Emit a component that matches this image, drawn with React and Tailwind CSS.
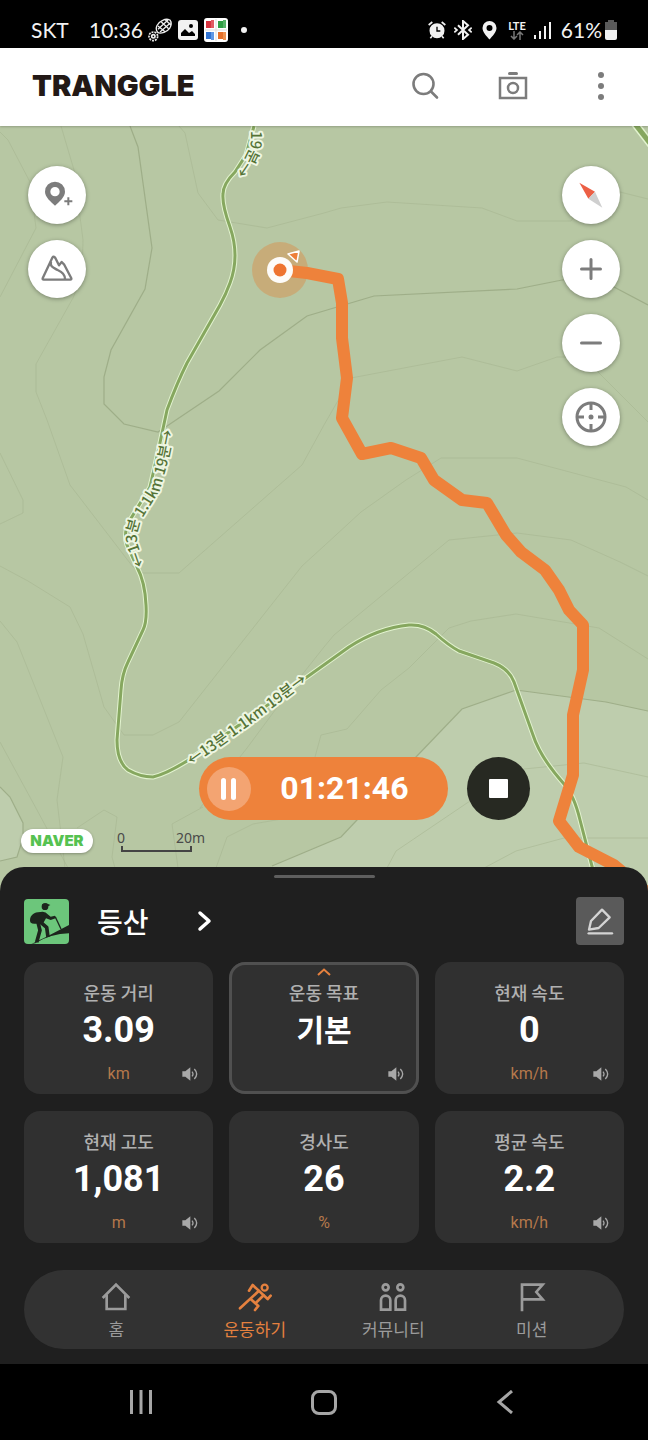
import { useState } from "react"

const thinContours = [
  "M0 132 L8 140 L30 182 L36 228 L0 297",
  "M61 126 L74 170 L83 240 L82 277 L73 298 L36 364 L36 392 L47 420 L70 485 L133 567 L143 573 H179 L302 465 L324 425 L351 378 L462 357 L517 371 L557 357 L580 357 L597 371 L648 422",
  "M179 126 L185 133 L198 193 L218 220 L267 228 L324 213 L341 208 L387 202 L482 208 L517 221 H571 L592 190 L620 192 L648 199",
  "M0 453 L23 500 V513 L0 524",
  "M0 566 L28 581 L70 607 L83 634 L104 707 L124 735 H153 L179 722 L302 566 L324 546 L361 512 L406 480 L441 458 H517 L626 487 L648 500",
  "M0 621 L17 642 L63 757 L57 800 L65 868",
  "M0 742 L37 810 L68 868",
  "M200 808 L247 748 L290 690 L324 647 L334 635 L449 540 L517 533 L571 540 L620 562 L648 576",
  "M315 757 L321 735 L347 729 L381 690 L409 668 L449 628 L471 621 L516 614 L599 628 L648 659",
  "M77 828 L104 810 L117 817 L112 857 L115 868",
  "M178 868 L172 824 L203 807",
  "M216 868 L227 837 L253 824 L293 817",
  "M387 868 L396 851 L467 803 L524 769 L584 763 L648 777",
  "M484 868 L516 851 L564 838 H648",
]

const indexContours = [
  "M130 126 L138 147 L152 248 L145 289 L111 350 L104 377 V404 L124 424 L158 432 L170 424 L219 391 L260 350 L307 316 L374 296 L517 289 L562 280 L600 279 L614 287 L648 305",
  "M0 787 L10 797 L23 823 V838 L17 857 L0 861",
  "M272 866 L341 837 L357 820 L416 757 L462 709 L516 690 L606 702 L648 711",
]

const trailPath =
  "M254 126 L246 155 L235 172 Q223 184 223 194 Q222 205 230 227 Q240 256 230 283 Q226 294 220 305 L187 363 Q177 383 167 410 L158 452 L150 487 L130 520 Q123 532 127 545 L137 567 Q145 582 146 605 Q147 622 143 630 L128 662 Q122 674 121 690 L117 740 Q117 762 128 770 Q140 777 153 777 Q166 774 187 761 L248 719 L307 677 L349 647 Q378 628 409 625 Q424 624 436 634 Q448 645 459 651 L494 663 Q509 669 514 682 L533 735 Q540 757 564 784 Q574 795 580 820 L593 870"

const routePath =
  "M280 270 L307 273 L338 279 L342 303 V338 L347 378 L342 418 L362 454 L391 448 L421 458 L434 480 L462 500 L487 503 L506 535 L521 552 L545 570 L559 590 L569 610 L583 625 V670 L573 715 V775 L559 821 L579 847 L614 865 L650 895"

const TrailLabel = ({ href, children }) => (
  <text
    fontSize="15"
    fontWeight="500"
    fill="#557337"
    stroke="#eef6e2"
    strokeWidth="4"
    strokeLinejoin="round"
    paintOrder="stroke"
  >
    <textPath href={href}>{children}</textPath>
  </text>
)

const TrailMap = () => (
  <svg
    className="absolute inset-0 w-full h-full"
    viewBox="0 126 648 769"
    preserveAspectRatio="xMidYMin slice"
    aria-label="등산 지도"
  >
    <defs>
      <path id="label-west" d="M145 565 L138 545 Q135 532 140 522 L160 490 L167 465 L175 425" />
      <path id="label-south" d="M192 766 L250 725 L318 674" />
      <path id="label-north" d="M251 131 V138 Q251 150 244 160 L225 188" />
    </defs>
    <rect y="126" width="648" height="769" fill="#b7c7a3" />
    <path d="M250 895 L272 866 L341 837 L357 820 L416 757 L462 709 L516 690 L606 702 L648 711 V895 Z" fill="#becdad" />
    <path d="M0 787 L10 797 L23 823 V838 L17 857 L0 861 Z" fill="#becdad" />
    <g fill="none" stroke="#a5b490" strokeWidth="1">
      {thinContours.map((d) => <path key={d} d={d} strokeOpacity="0.55" />)}
    </g>
    <g fill="none" stroke="#9bab85" strokeWidth="1.200" strokeOpacity="0.9">
      {indexContours.map((d) => <path key={d} d={d} />)}
    </g>

    {/* hiking trails */}
    <g fill="none" strokeLinejoin="round">
      <path d={trailPath} stroke="#e2f3cf" strokeWidth="5" />
      <path d={trailPath} stroke="#86a75f" strokeWidth="3" />
      <path d="M632 120 L656 151" stroke="#e2f3cf" strokeWidth="8" />
      <path d="M632 120 L656 151" stroke="#86a75f" strokeWidth="5" />
    </g>
    <TrailLabel href="#label-west">←13분 1.1km 19분→</TrailLabel>
    <TrailLabel href="#label-south">←13분 1.1km 19분→</TrailLabel>
    <TrailLabel href="#label-north">19분→</TrailLabel>

    {/* recorded route and current position */}
    <circle cx="280" cy="270" r="28" fill="#dc8c46" fillOpacity="0.45" />
    <path d={routePath} fill="none" stroke="#ee823b" strokeWidth="12" strokeLinejoin="round" />
    <circle cx="280" cy="270" r="13" fill="#fdfbf8" />
    <circle cx="280" cy="270" r="6.5" fill="#ee7430" />
    <path d="M288 254 L299 251 L297 262 Z" fill="#ee7f3a" stroke="#fff" strokeWidth="1.5" strokeLinejoin="round" />
  </svg>
)

const StatusBar = () => (
  <div className="h-12 pt-3 pl-[31px] pr-[31px] bg-black text-[#f2f2f2] flex items-center justify-between font-['Lato','Noto_Sans_CJK_KR',sans-serif] text-[21px] leading-6">
    <div className="flex items-center">
      <span className="w-[58px]">SKT</span>
      <span className="w-[59px]">10:36</span>
      <svg className="w-6 h-6 mr-[6px]" viewBox="0 0 72 72" fill="none" stroke="#eee" strokeWidth="4">
        <path d="M28 42 C20 30 28 14 44 7 C56 1 68 4 69 12 C72 26 62 38 48 43 C40 46 32 46 28 42 Z" />
        <path d="M30 34 L60 6 M36 42 L68 14 M30 24 L52 42 M40 12 L62 32 M52 5 L69 22" strokeWidth="4" />
        <circle cx="16" cy="55" r="13" strokeDasharray="6 3" strokeWidth="5" />
        <circle cx="16" cy="55" r="5" strokeWidth="5" />
      </svg>
      <svg className="w-5 h-5 mr-[6px]" viewBox="0 0 20 20">
        <rect width="20" height="20" rx="3" fill="#f2f2f2" />
        <path d="M3 16 V13 L7 9 L11 13 L14 11 L17 14 V16 Z" />
        <circle cx="13" cy="6" r="2" />
      </svg>
      <svg className="w-6 h-6" viewBox="0 0 24 24">
        <rect width="24" height="24" rx="3" fill="#fff" />
        <path d="M12 1 V23 M1 12 H23" stroke="#ddd" />
        <rect x="2" y="3" width="6" height="7" fill="#d6343f" />
        <rect x="7" y="2" width="3" height="8" fill="#e05b63" />
        <rect x="14" y="3" width="6" height="7" fill="#2f9e44" />
        <rect x="19" y="2" width="3" height="8" fill="#57b368" />
        <rect x="2" y="14" width="6" height="7" fill="#3173d2" />
        <rect x="7" y="14" width="3" height="8" fill="#5e98e6" />
        <rect x="14" y="14" width="6" height="7" fill="#e5702a" />
        <rect x="19" y="14" width="3" height="8" fill="#ef9350" />
      </svg>
      <span className="w-[6px] h-[6px] ml-[13px] rounded-full bg-[#f2f2f2]" />
    </div>
    <div className="flex items-center">
      <svg className="w-[18px] h-[18px] mr-2" viewBox="0 0 54 54" fill="none" stroke="#f2f2f2" strokeWidth="5">
        <circle cx="27" cy="29" r="20" fill="#f2f2f2" />
        <path d="M2 12 L13 3 M41 3 L52 12 M12 46 L7 52 M42 46 L47 52" />
        <path d="M27 17 V30 H37" stroke="#000" strokeWidth="4" />
      </svg>
      <svg className="w-[18px] h-5 mr-[10px]" viewBox="0 0 54 60" fill="none" stroke="#f2f2f2" strokeWidth="6">
        <path d="M12 16 L42 44 L27 57 V3 L42 16 L12 44" />
        <path d="M1 23 L9 30 L1 37 M53 23 L45 30 L53 37" strokeWidth="5" />
      </svg>
      <svg className="w-[15px] h-5 mr-[11px]" viewBox="0 0 15 20">
        <path fillRule="evenodd" fill="#f2f2f2" d="M7.500 1 A7 7 0 0 0 .5 8 C.5 12 4.500 16 7.500 19.500 C10.500 16 14.500 12 14.500 8 A7 7 0 0 0 7.500 1 Z M7.500 5 A3 3 0 1 1 7.500 11 A3 3 0 1 1 7.500 5 Z" />
      </svg>
      <span className="mr-2 flex flex-col items-center">
        <span className="text-[11px] leading-[10px] font-bold">LTE</span>
        <svg className="w-[14px] h-[9px]" viewBox="0 0 14 9" fill="none" stroke="#777" strokeWidth="1.5">
          <path d="M4 0 V8 M1 5 L4 8 L7 5 M10 9 V1 M7 4 L10 1 L13 4" />
        </svg>
      </span>
      <svg className="w-[18px] h-5 mr-[9px]" viewBox="0 0 18 20" stroke="#f2f2f2" strokeWidth="2">
        <path d="M1 15 V19 M6 11 V19 M11 6 V19 M16 2 V19" />
      </svg>
      <span className="mr-[3px]">61%</span>
      <svg className="w-3 h-5" viewBox="0 0 12 20">
        <path d="M3 2 V0 H9 V2 H12 V10 H0 V2 Z" fill="#5a5a5a" />
        <path d="M0 10 H12 V18 Q12 20 10 20 H2 Q0 20 0 18 Z" fill="#f2f2f2" />
      </svg>
    </div>
  </div>
)

const Header = () => (
  <header className="relative h-[78px] pl-8 pr-[23px] pb-[2px] bg-white flex items-center justify-between shadow-[0_1px_2px_rgba(0,0,0,0.2)] z-10">
    <h1 className="font-['Inter',sans-serif] font-black text-[29px] leading-8 text-[#231916]">TRANGGLE</h1>
    <div className="flex items-center gap-10">
      <button aria-label="검색" className="w-12 h-12 flex items-center justify-center">
        <svg className="w-7 h-7" viewBox="0 0 28 28" fill="none" stroke="#7c7c7c" strokeWidth="2.600" strokeLinecap="round">
          <circle cx="12.500" cy="12" r="10" />
          <path d="M20 19.500 L26 25.500" />
        </svg>
      </button>
      <button aria-label="카메라" className="w-12 h-12 flex items-center justify-center">
        <svg className="w-[30px] h-[30px]" viewBox="0 0 30 30" fill="none" stroke="#7c7c7c" strokeWidth="2.500">
          <rect x="2" y="7" width="26" height="20" />
          <circle cx="15" cy="17" r="5" />
          <path d="M11.500 2.500 H18.500" strokeWidth="3" strokeLinecap="round" />
        </svg>
      </button>
      <button aria-label="더보기" className="w-12 h-12 flex flex-col items-center justify-center gap-[5px]">
        <span className="w-[6px] h-[6px] rounded-full bg-[#7c7c7c]" />
        <span className="w-[6px] h-[6px] rounded-full bg-[#7c7c7c]" />
        <span className="w-[6px] h-[6px] rounded-full bg-[#7c7c7c]" />
      </button>
    </div>
  </header>
)

const MapButton = ({ label, children }) => (
  <button
    aria-label={label}
    className="w-[58px] h-[58px] rounded-full bg-white flex items-center justify-center shadow-[0_1px_4px_rgba(0,0,0,0.35)]"
  >
    {children}
  </button>
)

const MapControls = () => (
  <div className="flex items-start justify-between px-7">
    <div className="flex flex-col gap-4">
      <MapButton label="위치 추가">
        <svg className="w-8 h-8" viewBox="0 0 96 96">
          <path fillRule="evenodd" fill="#7c7c7c" d="M42 8 A30 30 0 0 0 12 38 C12 55 30 68 42 80 C54 68 72 55 72 38 A30 30 0 0 0 42 8 Z M42 24 A14 14 0 1 1 42 52 A14 14 0 1 1 42 24 Z" />
          <path d="M70 67 H94 M82 55 V79" stroke="#fff" strokeWidth="14" />
          <path d="M70 67 H94 M82 55 V79" stroke="#7c7c7c" strokeWidth="6" />
        </svg>
      </MapButton>
      <MapButton label="지형">
        <svg className="w-8 h-8" viewBox="0 0 96 96" fill="none" stroke="#7c7c7c" strokeWidth="7" strokeLinejoin="round">
          <path d="M5 76 L34 14 Q38 8 43 15 L54 37 L62 27 L69 34 L91 76 Q92 80 88 80 H8 Q4 80 5 76 Z" />
          <path d="M30 26 C26 42 38 44 50 51 C64 58 72 64 72 79" />
        </svg>
      </MapButton>
    </div>
    <div className="flex flex-col gap-4">
      <MapButton label="나침반">
        <svg className="w-8 h-8" viewBox="0 0 96 96">
          <path d="M13 11 L60 38 L40 59 Z" fill="#ec5f45" />
          <path d="M60 38 L82 86 L40 59 Z" fill="#cfcfcf" />
        </svg>
      </MapButton>
      <MapButton label="확대">
        <svg className="w-6 h-6" viewBox="0 0 24 24" stroke="#7c7c7c" strokeWidth="3" strokeLinecap="round">
          <path d="M2.500 12 H21.500 M12 2.500 V21.500" />
        </svg>
      </MapButton>
      <MapButton label="축소">
        <svg className="w-6 h-6" viewBox="0 0 24 24" stroke="#7c7c7c" strokeWidth="3" strokeLinecap="round">
          <path d="M2.500 12 H21.500" />
        </svg>
      </MapButton>
      <MapButton label="현재 위치">
        <svg className="w-8 h-8" viewBox="0 0 32 32" fill="none" stroke="#7c7c7c" strokeWidth="3">
          <circle cx="16" cy="16" r="14" />
          <path d="M16 2 V9 M16 23 V30 M2 16 H9 M23 16 H30" />
          <circle cx="16" cy="16" r="2.500" fill="#7c7c7c" stroke="none" />
        </svg>
      </MapButton>
    </div>
  </div>
)

const Recorder = () => {
  const [paused, setPaused] = useState(false)

  return (
    <div className="flex items-center justify-center gap-[19px] pl-20">
      <div className="w-[249px] h-[63px] pl-2 pr-[39px] rounded-full bg-[#ee823b] flex items-center justify-between">
        <button
          aria-label="일시정지"
          aria-pressed={paused}
          onClick={() => setPaused(!paused)}
          className="w-11 h-11 rounded-full bg-[#f3a472] flex items-center justify-center gap-[5px]"
        >
          <span className="w-[5px] h-[22px] rounded-full bg-white" />
          <span className="w-[5px] h-[22px] rounded-full bg-white" />
        </button>
        <time className="pb-[2px] font-['Roboto',sans-serif] font-bold text-[32px] leading-10 text-white">01:21:46</time>
      </div>
      <button aria-label="정지" className="w-[63px] h-[63px] rounded-full bg-[#272922] flex items-center justify-center">
        <span className="w-[19px] h-[19px] rounded-[1px] bg-white" />
      </button>
    </div>
  )
}

const MapFooter = () => (
  <div className="flex items-center gap-6 pl-[21px]">
    <span className="w-[72px] h-6 rounded-full bg-white flex items-center justify-center font-['Inter',sans-serif] font-black text-[15px] leading-6 text-[#56c251] shadow-[0_1px_3px_rgba(0,0,0,0.3)]">
      NAVER
    </span>
    <div className="w-[88px] font-['Noto_Sans',sans-serif] text-sm leading-4 text-[#4a4a4a]">
      <div className="flex justify-between">
        <span>0</span>
        <span>20m</span>
      </div>
      <div className="ml-1 w-[71px] h-[6px] border-x-2 border-b-2 border-[#444]" />
    </div>
  </div>
)

const SoundIcon = () => (
  <svg className="w-4 h-4" viewBox="0 0 48 48" fill="none" stroke="#a8a8a8" strokeWidth="4">
    <path d="M1 16 H10 L25 4 V44 L10 32 H1 Z" fill="#a8a8a8" stroke="none" />
    <path d="M30 17 Q36 24 30 31 M37 9 Q51 24 37 39" />
  </svg>
)

const StatCard = ({ label, value, unit, sound, selected }) => (
  <button
    className={
      selected
        ? "relative h-[132px] pt-5 rounded-[16px] bg-[#303030] ring-3 ring-inset ring-[#505050] flex flex-col items-center"
        : "h-[132px] pt-5 rounded-[16px] bg-[#303030] flex flex-col items-center"
    }
  >
    {selected && (
      <svg className="absolute top-[6px] w-[14px] h-2" viewBox="0 0 14 8" fill="none" stroke="#e6813e" strokeWidth="2">
        <path d="M1 7 L7 1.500 L13 7" />
      </svg>
    )}
    <span className="text-lg leading-5 font-medium text-[#b0b0b0]">{label}</span>
    <span
      className={
        selected
          ? "mt-2 mb-1 text-[30px] leading-9 font-bold text-white"
          : "mt-2 font-['Roboto',sans-serif] text-[36px] leading-10 font-bold text-white"
      }
    >
      {value}
    </span>
    <span className="mt-[14px] w-full h-5 px-[15px] grid grid-cols-3 items-center">
      <span className="col-start-2 font-['Roboto',sans-serif] text-base leading-5 text-[#b5784b]">{unit}</span>
      <span className="col-start-3 h-4 justify-self-end">{sound && <SoundIcon />}</span>
    </span>
  </button>
)

const stats = [
  { label: "운동 거리", value: "3.09", unit: "km", sound: true },
  { label: "운동 목표", value: "기본", unit: "", sound: true, selected: true },
  { label: "현재 속도", value: "0", unit: "km/h", sound: true },
  { label: "현재 고도", value: "1,081", unit: "m", sound: true },
  { label: "경사도", value: "26", unit: "%", sound: false },
  { label: "평균 속도", value: "2.2", unit: "km/h", sound: true },
]

const tabs = [
  {
    name: "홈",
    icon: (
      <svg className="w-[30px] h-[30px]" viewBox="0 0 90 90" fill="none" stroke="currentColor" strokeWidth="8">
        <path d="M5 48 L45 8 L85 48" />
        <path d="M17 38 V81 H73 V38" />
      </svg>
    ),
  },
  {
    name: "운동하기",
    active: true,
    icon: (
      <svg className="w-9 h-[30px]" viewBox="0 0 108 90" fill="none" stroke="currentColor" strokeWidth="8" strokeLinejoin="round" strokeLinecap="round">
        <circle cx="83" cy="17" r="9" strokeWidth="7" />
        <path d="M9 79 L66 26 M36 26 L47 9 L92 51 L101 41" />
        <path d="M41 51 L64 72 L54 84 M57 62 L80 40" />
      </svg>
    ),
  },
  {
    name: "커뮤니티",
    icon: (
      <svg className="w-[30px] h-[30px]" viewBox="0 0 90 90" fill="none" stroke="currentColor" strokeWidth="8">
        <circle cx="23" cy="16" r="9" />
        <circle cx="67" cy="16" r="9" />
        <path d="M9 83 V55 A14 14 0 0 1 37 55 V83 Z M53 83 V55 A14 14 0 0 1 81 55 V83 Z" />
      </svg>
    ),
  },
  {
    name: "미션",
    icon: (
      <svg className="w-[30px] h-[30px]" viewBox="0 0 90 90" fill="none" stroke="currentColor" strokeWidth="8">
        <path d="M15 88 V8 H77 L58 30 L77 52 H15" />
      </svg>
    ),
  },
]

const HikerIcon = () => (
  <svg className="w-[45px] h-[45px] rounded-[4px]" viewBox="0 0 135 135">
    <rect width="135" height="135" fill="#6cc67b" />
    <g fill="#1d241d">
      <circle cx="63" cy="23" r="10" />
      <path d="M54 18 Q57 11 67 13 L79 18 L72 22 H55 Z" />
      <path d="M19 70 C15 54 26 41 42 40 L56 38 Q66 38 71 46 L80 53 L93 50 L97 57 L80 63 L66 58 L58 72 L36 74 Q25 76 19 70 Z" />
      <path d="M22 135 L66 114 L135 78 V103 Q80 104 34 133 Z" />
    </g>
    <g fill="none" stroke="#1d241d" strokeWidth="11" strokeLinejoin="round">
      <path d="M50 70 L68 85 L72 114" />
      <path d="M42 70 L48 94 L38 130" />
    </g>
    <path d="M94 54 L111 90" stroke="#1d241d" strokeWidth="4" />
  </svg>
)

const WorkoutPanel = () => (
  <section className="relative -mt-7 px-6 pt-2 pb-[15px] rounded-t-[24px] bg-[#1f1f1f]">
    <div className="mx-auto w-[101px] h-[3px] rounded-full bg-[#5e5e5e]" />
    <div className="mt-[19px] h-12 flex items-center justify-between">
      <button className="flex items-center text-white">
        <HikerIcon />
        <span className="ml-7 text-[28px] leading-10 font-medium">등산</span>
        <svg className="ml-12 w-4 h-6" viewBox="0 0 16 24" fill="none" stroke="#fff" strokeWidth="3.500" strokeLinecap="round" strokeLinejoin="round">
          <path d="M3 4 L12 12 L3 20" />
        </svg>
      </button>
      <button aria-label="편집" className="w-12 h-12 rounded-[4px] bg-[#5a5a5a] flex items-center justify-center">
        <svg className="w-7 h-7" viewBox="0 0 84 84" fill="none" stroke="#d4d4d4" strokeWidth="7" strokeLinejoin="round">
          <path d="M9 68 L15 42 L48 8 L71 31 L38 63 Z" />
          <path d="M8 79 H78" strokeLinecap="round" />
        </svg>
      </button>
    </div>

    <div className="mt-[17px] grid grid-cols-3 gap-x-4 gap-y-[17px]">
      {stats.map((stat) => (
        <StatCard key={stat.label} {...stat} />
      ))}
    </div>

    <nav className="mt-[27px] h-[79px] px-[23px] rounded-full bg-[#323232] grid grid-cols-4">
      {tabs.map((tab) => (
        <a
          key={tab.name}
          href="#"
          aria-current={tab.active ? "page" : undefined}
          className={
            tab.active
              ? "pt-3 flex flex-col items-center gap-[7px] text-[#e5813f]"
              : "pt-3 flex flex-col items-center gap-[7px] text-[#9b9b9b]"
          }
        >
          {tab.icon}
          <span className="text-[17px] leading-5">{tab.name}</span>
        </a>
      ))}
    </nav>
  </section>
)

const SystemNav = () => (
  <div className="h-[76px] px-[50px] bg-black grid grid-cols-3 items-center justify-items-center">
    <button aria-label="최근 앱" className="w-12 h-12 flex items-center justify-center">
      <svg className="w-6 h-6" viewBox="0 0 24 24" stroke="#a6a6a6" strokeWidth="3">
        <path d="M2.500 0 V24 M12 0 V24 M21.500 0 V24" />
      </svg>
    </button>
    <button aria-label="홈 화면" className="w-12 h-12 flex items-center justify-center">
      <span className="w-[26px] h-[25px] rounded-[8px] border-3 border-[#a6a6a6]" />
    </button>
    <button aria-label="뒤로" className="w-12 h-12 flex items-center justify-center">
      <svg className="w-6 h-6" viewBox="0 0 24 24" fill="none" stroke="#a6a6a6" strokeWidth="3">
        <path d="M17 1 L4 12 L17 23" />
      </svg>
    </button>
  </div>
)

const App = () => {
  return (
    <main className="min-h-screen bg-black flex flex-col font-['Noto_Sans_CJK_KR',sans-serif]">
      <StatusBar />
      <Header />
      <section className="relative flex-1 min-h-[560px] overflow-hidden flex flex-col">
        <TrailMap />
        <div className="relative flex-1 pt-10 pb-[42px] flex flex-col justify-between">
          <MapControls />
          <div className="flex flex-col gap-[9px]">
            <Recorder />
            <MapFooter />
          </div>
        </div>
      </section>
      <WorkoutPanel />
      <SystemNav />
    </main>
  )
}

export default App
